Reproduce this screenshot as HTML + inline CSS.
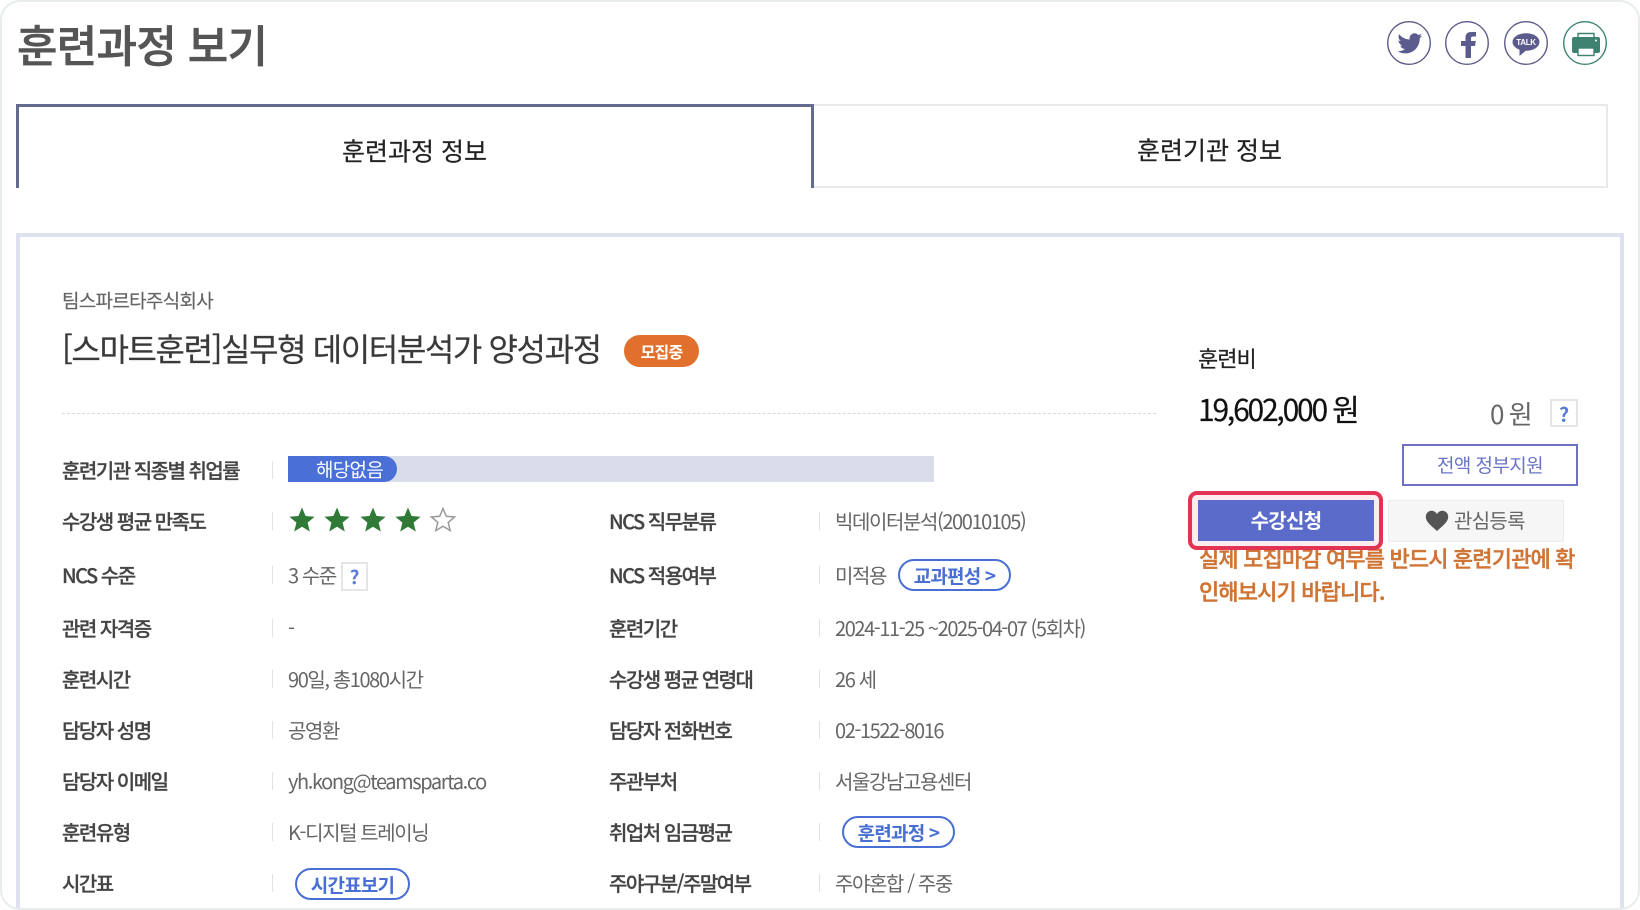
<!DOCTYPE html>
<html lang="ko"><head><meta charset="utf-8"><title>훈련과정 보기</title>
<style>
*{box-sizing:border-box;margin:0;padding:0}
html,body{width:1640px;height:910px;background:#fff;overflow:hidden}
body{position:relative;font-family:"Noto Sans CJK KR","Liberation Sans",sans-serif}
.a{position:absolute}
.t{position:absolute;white-space:nowrap;line-height:1;transform:translateY(-50%)}
.l{font-size:20px;letter-spacing:-1.5px;color:#444;font-weight:500;-webkit-text-stroke:.25px #444}
.v{font-size:20px;letter-spacing:-1.4px;color:#666}
.s{position:absolute;width:1px;height:18px;background:#e2e2e2;transform:translateY(-50%)}
.pill{position:absolute;border:2px solid #4a6fd4;border-radius:16px;color:#4a6fd4;font-weight:700;font-size:19px;letter-spacing:-.8px;display:flex;align-items:center;justify-content:center;white-space:nowrap;background:#fff}
.q{position:absolute;border:2px solid #e4e6e8;background:#fff;color:#5a7ad8;font-weight:700;font-size:19px;display:flex;align-items:center;justify-content:center}
.ic{position:absolute;top:21px;width:44px;height:44px}
</style></head><body>

<div class="t" style="left:17px;top:43px;font-size:44px;letter-spacing:-.7px;color:#555;font-weight:500;-webkit-text-stroke:.6px #555">훈련과정 보기</div>

<svg class="ic" style="left:1387px" viewBox="0 0 44 44"><circle cx="22" cy="22" r="21.3" fill="#fff" stroke="#5b5b86" stroke-width="1.4"/><path transform="translate(10.5 10) scale(1.03)" fill="#5b5b8e" d="M23.953 4.57a10 10 0 01-2.825.775 4.958 4.958 0 002.163-2.723c-.951.555-2.005.959-3.127 1.184a4.92 4.92 0 00-8.384 4.482C7.69 8.095 4.067 6.13 1.64 3.162a4.822 4.822 0 00-.666 2.475c0 1.71.87 3.213 2.188 4.096a4.904 4.904 0 01-2.228-.616v.06a4.923 4.923 0 003.946 4.827 4.996 4.996 0 01-2.212.085 4.936 4.936 0 004.604 3.417 9.867 9.867 0 01-6.102 2.105c-.39 0-.779-.023-1.17-.067a13.995 13.995 0 007.557 2.209c9.053 0 13.998-7.496 13.998-13.985 0-.21 0-.42-.015-.63A9.935 9.935 0 0024 4.59z"/></svg>
<svg class="ic" style="left:1445px" viewBox="0 0 44 44"><circle cx="22" cy="22" r="21.3" fill="#fff" stroke="#5b5b86" stroke-width="1.4"/><path fill="#5b5b8e" d="M20.500 37V25H16V20H20.500V16.500C20.500 12.500 23 11 26.500 11H31V15.500H28C26.400 15.500 26 16.200 26 17.600V20H30.800L30 25H26V37Z"/></svg>
<svg class="ic" style="left:1504px" viewBox="0 0 44 44"><circle cx="22" cy="22" r="21.3" fill="#fff" stroke="#5b5b86" stroke-width="1.4"/><ellipse cx="22" cy="21" rx="13.5" ry="8.8" fill="#5b5b8e"/><path fill="#5b5b8e" d="M15.500 27.500L15.500 35L22 29.500Z"/><text x="22" y="24" text-anchor="middle" font-family="Liberation Sans" font-weight="700" font-size="8" letter-spacing="-.3" fill="#fff">TALK</text></svg>
<svg class="ic" style="left:1563px" viewBox="0 0 44 44"><circle cx="22" cy="22" r="21.3" fill="#fff" stroke="#3e8272" stroke-width="1.4"/><path fill="none" stroke="#3e8272" stroke-width="1.4" d="M15 16V12.500H31V16"/><rect x="9" y="16" width="28" height="16" rx="2" fill="#3e8272"/><rect x="15" y="27" width="16" height="7.500" fill="#fff" stroke="#3e8272" stroke-width="1.4"/><circle cx="33" cy="19.500" r="1" fill="#fff"/></svg>

<div class="a" style="left:813px;top:104px;width:795px;height:84px;border:2px solid #e8e9ea;border-left:0"></div>
<div class="a" style="left:16px;top:104px;width:798px;height:84px;border:3px solid #636b8f;border-bottom:0;background:#fff"></div>
<div class="t" style="left:342px;top:151px;font-size:25px;color:#222;-webkit-text-stroke:.2px #222">훈련과정 정보</div>
<div class="t" style="left:1137px;top:150px;font-size:25px;color:#222;-webkit-text-stroke:.2px #222">훈련기관 정보</div>

<div class="a" style="left:16px;top:233px;width:1608px;height:676px;border:4px solid #dee1ee;border-bottom:0"></div>

<div class="t" style="left:62px;top:300px;font-size:19px;letter-spacing:-.7px;color:#666;-webkit-text-stroke:.2px #666">팀스파르타주식회사</div>
<div class="t" style="left:62px;top:348px;font-size:32px;letter-spacing:-1.4px;color:#3a3a3a;-webkit-text-stroke:.2px #3a3a3a">[스마트훈련]실무형 데이터분석가 양성과정</div>
<div class="a" style="left:624px;top:335px;width:75px;height:32px;border-radius:16px;background:#e0702b;color:#fff;font-size:16px;font-weight:700;letter-spacing:-.8px;display:flex;align-items:center;justify-content:center">모집중</div>
<div class="a" style="left:62px;top:413px;width:1094px;border-top:1px dashed #d8d8d8"></div>

<div class="t l" style="left:62px;top:470px">훈련기관 직종별 취업률</div><div class="s" style="left:272px;top:470px"></div>
<div class="a" style="left:288px;top:456px;width:646px;height:26px;background:#d9ddea"></div>
<div class="a" style="left:288px;top:456px;width:109px;height:26px;background:#4a6fd6;border-radius:0 13px 13px 0"></div>
<div class="t" style="left:316px;top:469px;font-size:19px;letter-spacing:-.7px;color:#fff">해당없음</div>

<div class="t l" style="left:62px;top:521px">수강생 평균 만족도</div><div class="s" style="left:272px;top:521px"></div>
<svg class="a" style="left:288px;top:505px" width="172" height="30" viewBox="0 0 172 30"><g fill="#2f7a37"><polygon points="14,2.5 17.6,11 26.6,11.7 19.6,17.6 21.8,26.5 14,21.7 6.2,26.5 8.4,17.6 1.4,11.7 10.4,11"/><polygon transform="translate(35 0)" points="14,2.5 17.6,11 26.6,11.7 19.6,17.6 21.8,26.5 14,21.7 6.2,26.5 8.4,17.6 1.4,11.7 10.4,11"/><polygon transform="translate(71 0)" points="14,2.5 17.6,11 26.6,11.7 19.6,17.6 21.8,26.5 14,21.7 6.2,26.5 8.4,17.6 1.4,11.7 10.4,11"/><polygon transform="translate(106 0)" points="14,2.5 17.6,11 26.6,11.7 19.6,17.6 21.8,26.5 14,21.7 6.2,26.5 8.4,17.6 1.4,11.7 10.4,11"/></g><polygon transform="translate(141 0)" fill="#fff" stroke="#9a9a9a" stroke-width="1.5" points="14,3.5 17.3,11.3 25.6,12 19.2,17.4 21.2,25.6 14,21.2 6.8,25.6 8.8,17.4 2.4,12 10.7,11.3"/></svg>

<div class="t l" style="left:62px;top:575px">NCS 수준</div><div class="s" style="left:272px;top:575px"></div>
<div class="t v" style="left:288px;top:575px">3 수준</div>
<div class="q" style="left:341px;top:562px;width:27px;height:29px">?</div>

<div class="t l" style="left:62px;top:628px">관련 자격증</div><div class="s" style="left:272px;top:628px"></div>
<div class="t v" style="left:288px;top:628px">-</div>
<div class="t l" style="left:62px;top:679px">훈련시간</div><div class="s" style="left:272px;top:679px"></div>
<div class="t v" style="left:288px;top:679px">90일, 총1080시간</div>
<div class="t l" style="left:62px;top:730px">담당자 성명</div><div class="s" style="left:272px;top:730px"></div>
<div class="t v" style="left:288px;top:730px">공영환</div>
<div class="t l" style="left:62px;top:781px">담당자 이메일</div><div class="s" style="left:272px;top:781px"></div>
<div class="t v" style="left:288px;top:781px">yh.kong@teamsparta.co</div>
<div class="t l" style="left:62px;top:832px">훈련유형</div><div class="s" style="left:272px;top:832px"></div>
<div class="t v" style="left:288px;top:832px">K-디지털 트레이닝</div>
<div class="t l" style="left:62px;top:883px">시간표</div><div class="s" style="left:272px;top:883px"></div>
<div class="pill" style="left:295px;top:868px;width:115px;height:32px">시간표보기</div>

<div class="t l" style="left:609px;top:521px">NCS 직무분류</div><div class="s" style="left:819px;top:521px"></div>
<div class="t v" style="left:835px;top:521px">빅데이터분석(20010105)</div>
<div class="t l" style="left:609px;top:575px">NCS 적용여부</div><div class="s" style="left:819px;top:575px"></div>
<div class="t v" style="left:835px;top:575px">미적용</div>
<div class="pill" style="left:898px;top:559px;width:113px;height:32px">교과편성 &gt;</div>
<div class="t l" style="left:609px;top:628px">훈련기간</div><div class="s" style="left:819px;top:628px"></div>
<div class="t v" style="left:835px;top:628px">2024-11-25 ~2025-04-07 (5회차)</div>
<div class="t l" style="left:609px;top:679px">수강생 평균 연령대</div><div class="s" style="left:819px;top:679px"></div>
<div class="t v" style="left:835px;top:679px">26 세</div>
<div class="t l" style="left:609px;top:730px">담당자 전화번호</div><div class="s" style="left:819px;top:730px"></div>
<div class="t v" style="left:835px;top:730px">02-1522-8016</div>
<div class="t l" style="left:609px;top:781px">주관부처</div><div class="s" style="left:819px;top:781px"></div>
<div class="t v" style="left:835px;top:781px">서울강남고용센터</div>
<div class="t l" style="left:609px;top:832px">취업처 임금평균</div><div class="s" style="left:819px;top:832px"></div>
<div class="pill" style="left:842px;top:816px;width:113px;height:32px">훈련과정 &gt;</div>
<div class="t l" style="left:609px;top:883px">주야구분/주말여부</div><div class="s" style="left:819px;top:883px"></div>
<div class="t v" style="left:835px;top:883px">주야혼합 / 주중</div>

<div class="t" style="left:1198px;top:358px;font-size:22px;letter-spacing:-1px;color:#222;-webkit-text-stroke:.2px #222">훈련비</div>
<div class="t" style="left:1198px;top:408px;font-size:30px;letter-spacing:-2.2px;color:#111;-webkit-text-stroke:.2px #111">19,602,000 원</div>
<div class="t" style="left:1490px;top:414px;font-size:26px;letter-spacing:-1.5px;color:#666">0 원</div>
<div class="q" style="left:1550px;top:399px;width:28px;height:28px;font-size:20px">?</div>
<div class="a" style="left:1402px;top:444px;width:176px;height:42px;border:2px solid #6f6fc4;color:#6a72c8;font-size:19px;letter-spacing:-.6px;display:flex;align-items:center;justify-content:center;background:#fff;padding-bottom:2px">전액 정부지원</div>

<div class="t" style="left:1199px;top:558px;font-size:22px;letter-spacing:-.85px;color:#cf7434;font-weight:500;-webkit-text-stroke:.4px #cf7434">실제 모집마감 여부를 반드시 훈련기관에 확</div>
<div class="t" style="left:1199px;top:591px;font-size:22px;letter-spacing:-.85px;color:#cf7434;font-weight:500;-webkit-text-stroke:.4px #cf7434">인해보시기 바랍니다.</div>

<div class="a" style="left:1388px;top:500px;width:176px;height:42px;background:#f6f6f6;border:1px solid #ececec"></div>
<svg class="a" style="left:1425px;top:510px" width="24" height="22" viewBox="0 0 24 22"><path fill="#555" d="M12 21C5 15 .8 11.5.8 6.8.8 3.2 3.6.8 6.6.8 8.8.8 10.8 2 12 4 13.200 2 15.200.8 17.400.8 20.400.8 23.200 3.200 23.200 6.800 23.200 11.500 19 15 12 21Z"/></svg>
<div class="t" style="left:1454px;top:520px;font-size:20px;letter-spacing:-.7px;color:#666">관심등록</div>

<div class="a" style="left:1188px;top:491px;width:195px;height:59px;border:4px solid #e23355;border-radius:9px;background:#fdecef"></div>
<div class="a" style="left:1198px;top:500px;width:176px;height:41px;background:#5a6bc9;color:#fff;font-size:20px;font-weight:700;letter-spacing:-.7px;display:flex;align-items:center;justify-content:center;padding-bottom:2px">수강신청</div>

<div class="a" style="left:0;top:0;width:1640px;height:910px;border:2px solid #e8ecec;border-radius:20px;box-shadow:0 0 0 20px #fff;clip-path:inset(0)"></div>
</body></html>
